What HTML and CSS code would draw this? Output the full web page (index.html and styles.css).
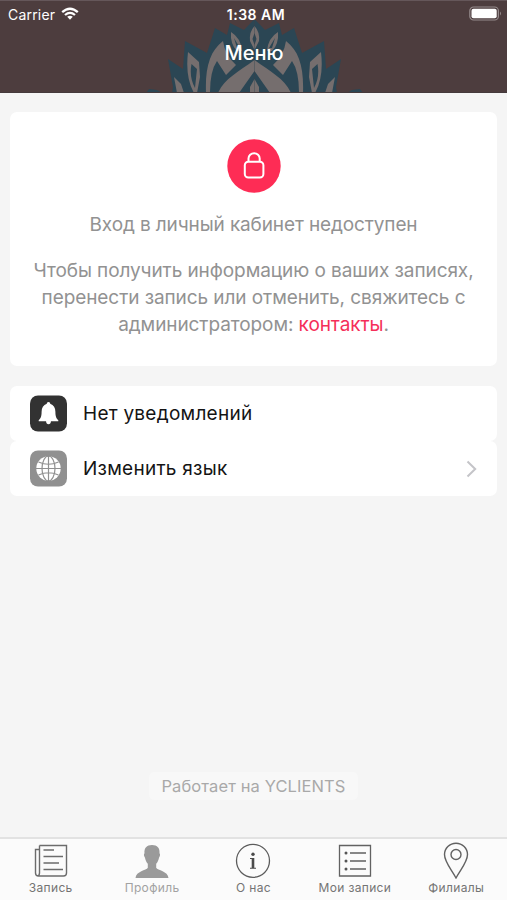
FILE: index.html
```html
<!DOCTYPE html>
<html lang="ru">
<head>
<meta charset="utf-8">
<title>Меню</title>
<link rel="stylesheet" href="styles.css">
</head>
<body>
<div class="app">
  <header class="header">
    <svg class="lotus" viewBox="0 0 507 93" aria-hidden="true">
      <defs>
        <g id="half">
          <path fill="#2b4654" d="M146 93L149 89L157 90L162 93H172L173 87L168 59L183 69L185 41L207 53L215 28L227 35L230 23L244 30L254.500 19V93Z"/>
          <g fill="#756e6e">
            <path d="M174 77L181 84L184 93H177Z"/>
            <path fill-rule="evenodd" d="M188 52L199 62L200 77L197 93H194Q185 77 188 52ZM191.500 64L197 69L195 88Q189 77 191.500 64Z"/>
            <path d="M223 41C210 51 205 67 206 93H210Q210 71 217 61L226 75L236 65Q225 55 223 41Z"/>
            <path fill-rule="evenodd" d="M231 32Q241 38 242 51H237Q230 44 231 32ZM234 38L240 48H237Z"/>
            <path d="M254.500 26Q249 32 250 41L254.500 50V45L252.500 39L254.500 33Z"/>
            <path d="M254.500 60C238 72 224 79 218 93H239L254.500 71Z"/>
            <path d="M254.500 79L250 87V93H254.500Z"/>
          </g>
        </g>
      </defs>
      <use href="#half"/>
      <use href="#half" transform="translate(509 0) scale(-1 1)"/>
    </svg>
    <div class="status">
      <div class="carrier"><span>Carrier</span>
        <svg width="18" height="14" viewBox="0 0 18 14"><g fill="none" stroke="#fff" stroke-width="2.300"><path d="M1.200 5.200Q9-1.700 16.800 5.200"/><path d="M4 8Q9 3.700 14 8"/></g><path fill="#fff" d="M6.200 9.800Q9 7.600 11.800 9.800L9 12.700Z"/></svg>
      </div>
      <div class="clock">1:38 AM</div>
      <svg class="battery" width="33" height="16" viewBox="0 0 33 16"><rect x=".8" y="1" width="28.600" height="13" rx="3.800" fill="none" stroke="#958b8c" stroke-width="1.200"/><rect x="2.500" y="2.700" width="25.200" height="9.600" rx="2" fill="#fff"/><path d="M31 5.500Q33 7.500 31 9.500Z" fill="#958b8c"/></svg>
    </div>
    <h1 class="title">Меню</h1>
  </header>

  <main class="main">
    <section class="notice">
      <svg class="lock" width="54" height="54" viewBox="0 0 54 54"><circle cx="27" cy="27" r="26.700" fill="#fe2c55"/><g fill="none" stroke="#fff" stroke-width="2"><rect x="17.800" y="22.800" width="18.600" height="15.700" rx="3.500"/><path d="M21.500 22.500V19.500a5.600 5.300 0 0 1 11.200 0V22.500"/></g></svg>
      <p class="lead">Вход в личный кабинет недоступен</p>
      <p class="info">Чтобы получить информацию о ваших записях,<br>перенести запись или отменить, свяжитесь с<br>администратором: <a class="link">контакты</a>.</p>
    </section>
    <section class="list">
      <div class="row">
        <svg class="tile" width="37" height="37" viewBox="0 0 37 37"><rect width="37" height="36" y=".5" rx="8" fill="#323232"/><path fill="#fff" d="M18.500 7c1.100 0 1.700.8 1.700 1.800 3.500 1.100 5.200 4 5.200 8 0 4.700.9 6.500 2.900 8.400v1H8.700v-1c2-1.900 2.900-3.700 2.900-8.400 0-4 1.700-6.900 5.200-8 0-1 .6-1.800 1.700-1.800zM16 26h5q-.3 3.200-2.500 3.200T16 26z"/></svg>
        <span>Нет уведомлений</span>
      </div>
      <div class="row">
        <svg class="tile" width="37" height="37" viewBox="0 0 37 37"><rect width="37" height="36" y=".5" rx="8" fill="#909090"/><circle cx="18.500" cy="18.500" r="12.200" fill="#fff"/><g fill="none" stroke="#909090" stroke-width="1.200"><path d="M18.500 6v25M6 18.500h25M8.500 12Q18.500 16.500 28.500 12M8.500 25Q18.500 20.500 28.500 25"/><ellipse cx="18.500" cy="18.500" rx="6.500" ry="12.500"/></g></svg>
        <span>Изменить язык</span>
        <svg class="chevron" width="12" height="18" viewBox="0 0 12 18"><path d="M1.500 1.500L9.200 9L1.500 16.500" fill="none" stroke="#c4c4c8" stroke-width="2"/></svg>
      </div>
    </section>
    <div class="powered"><span>Работает на YCLIENTS</span></div>
  </main>

  <nav class="tabs">
    <a class="tab"><svg width="38" height="38" viewBox="0 0 38 38"><g fill="none" stroke="#6c6c6c" stroke-width="1.400"><path d="M7.500 4.500H34.500V32q0 3-3 3H6.500q-3 0-3-3V8.500H7.500M7.500 4.500V32q0 3-2.500 3"/><path d="M11.500 9H22M11.500 15.500H31M11.500 22H27M11.500 28.500H31"/></g></svg><span>Запись</span></a>
    <a class="tab active"><svg width="38" height="38" viewBox="0 0 38 38"><path fill="#9a9a9a" d="M19 4c5.300 0 8 3 7.500 8.300.8.500.8 2.500-.4 4.200-.6 3-1.700 5-2.900 6.300v3.900c1.300 2.700 11.800 3.300 12.300 10.300h-33c.5-7 11-7.600 12.300-10.300v-3.900c-1.200-1.300-2.300-3.300-2.900-6.300-1.200-1.700-1.200-3.700-.4-4.200C11 7 13.700 4 19 4z"/></svg><span>Профиль</span></a>
    <a class="tab"><svg width="38" height="38" viewBox="0 0 38 38"><circle cx="19" cy="19.800" r="16.500" fill="none" stroke="#5c5c5c" stroke-width="1.300"/><circle cx="19" cy="13.200" r="1.700" fill="#4a4a4a"/><path fill="#4a4a4a" d="M16 17h4.300v9.700h1.700v1H16v-1h1.700v-8.700H16z"/></svg><span>О нас</span></a>
    <a class="tab"><svg width="38" height="38" viewBox="0 0 38 38"><g fill="none" stroke="#626262" stroke-width="1.300"><path d="M3.500 4.500H34.500V35H3.500Z"/><path d="M14 12H30M14 20H30M14 28H30"/></g><g fill="#555"><circle cx="10" cy="12" r="1.500"/><circle cx="10" cy="20" r="1.500"/><circle cx="10" cy="28" r="1.500"/></g></svg><span>Мои записи</span></a>
    <a class="tab"><svg width="38" height="38" viewBox="0 0 38 38"><g fill="none" stroke="#626262" stroke-width="1.400"><path d="M19 37C14.500 28.500 7.500 21 7.500 13.500a11.500 11.300 0 0 1 23 0C30.500 21 23.500 28.500 19 37Z"/><circle cx="19" cy="13.500" r="5"/></g></svg><span>Филиалы</span></a>
  </nav>
</div>
</body>
</html>
```
FILE: styles.css
```css
* { box-sizing: border-box; }
body { margin: 0; background: #f5f5f5; font-family: Inter, "Liberation Sans", sans-serif; color: #141414; }
.app { width: 507px; height: 900px; display: flex; flex-direction: column; overflow: hidden; }
.app svg { display: block; flex: none; }

.header { position: relative; height: 93px; flex: none; background: #4d3d3e; color: #fff; border-top: 1px solid #65575a; border-bottom: 1px solid #453a3c; overflow: hidden; }
.header .lotus { position: absolute; left: 0; top: -1px; width: 507px; height: 93px; }
.status { position: relative; height: 26px; display: grid; grid-template-columns: 1fr auto 1fr; align-items: center; padding: 0 5px 0 8px; }
.carrier { display: flex; gap: 6px; align-items: center; font-size: 14px; letter-spacing: .2px; }
.clock { font-size: 14px; font-weight: 600; letter-spacing: .5px; padding-left: 2px; }
.battery { justify-self: end; }
.title { position: relative; margin: 12px 0 0 1px; text-align: center; font-size: 20px; line-height: 28px; font-weight: 500; }

.main { flex: 1; display: flex; flex-direction: column; padding: 19px 10px 0 10px; }
.notice { height: 254px; flex: none; background: #fff; border-radius: 7px; padding-top: 27px; text-align: center; color: #929292; }
.lock { margin: 0 auto; }
.notice p { margin: 0; white-space: nowrap; font-size: 19px; line-height: 27px; letter-spacing: -.08px; }
.notice .lead { margin-top: 18px; letter-spacing: -.12px; }
.notice .info { margin-top: 19px; }
.link { color: #f52f59; }
.list { margin-top: 20px; }
.row { height: 55px; display: flex; align-items: center; background: #fff; border-radius: 7px; padding: 0 19px 0 20px; font-size: 19px; letter-spacing: .26px; }
.tile { margin-right: 16px; }
.chevron { margin-left: auto; }
.powered { margin-top: auto; margin-bottom: 37px; display: flex; justify-content: center; }
.powered span { padding: 0 12px; height: 28px; line-height: 28px; font-size: 16.500px; letter-spacing: .1px; color: #a9a9a9; background: #f8f8f8; border-radius: 5px; }

.tabs { height: 63px; flex: none; display: grid; grid-template-columns: repeat(5, 1fr); background: #fbfbfb; border-top: 2px solid #e2e2e2; }
.tab { display: flex; flex-direction: column; align-items: center; padding-top: 2px; font-size: 12px; line-height: 14px; letter-spacing: .35px; color: #747474; white-space: nowrap; }
.tab svg { margin-bottom: 2px; }
.tab.active { color: #a2a2a2; }
```
